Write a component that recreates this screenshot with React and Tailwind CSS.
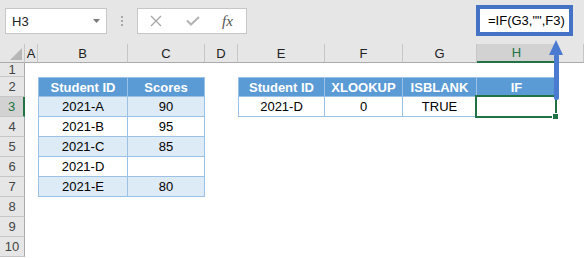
import React from 'react';

const COLS = ['A', 'B', 'C', 'D', 'E', 'F', 'G', 'H', ''];
const LEFT = {
  2: ['Student ID', 'Scores'],
  3: ['2021-A', '90'],
  4: ['2021-B', '95'],
  5: ['2021-C', '85'],
  6: ['2021-D', ''],
  7: ['2021-E', '80'],
};
const RIGHT = {
  2: ['Student ID', 'XLOOKUP', 'ISBLANK', 'IF'],
  3: ['2021-D', '0', 'TRUE', ''],
};

function tableCls(first, top, kind) {
  let c = 'flex items-center justify-center border-r border-b border-[#9bc2e6]';
  if (first) c += ' border-l';
  if (top) c += ' border-t';
  if (kind === 'header') c += ' bg-[#5b9bd5] text-white font-bold';
  else if (kind === 'band') c += ' bg-[#ddebf7] text-black';
  else c += ' bg-white text-black';
  return c;
}

function SheetCell({ r, ci }) {
  let text = '';
  let cls = 'bg-white';
  if (LEFT[r] && (ci === 1 || ci === 2)) {
    text = LEFT[r][ci - 1];
    cls = tableCls(ci === 1, r === 2, r === 2 ? 'header' : r % 2 === 1 ? 'band' : 'plain');
  } else if (RIGHT[r] && ci >= 4 && ci <= 7) {
    text = RIGHT[r][ci - 4];
    cls = tableCls(ci === 4, r === 2, r === 2 ? 'header' : 'plain');
  }
  const selected = r === 3 && ci === 7;
  return (
    <div className={cls + (selected ? ' relative' : '')}>
      {text}
      {selected && (
        <>
          <div className="absolute left-[-2px] top-[-2px] right-[-1px] bottom-[-2px] border-2 border-[#217346]" />
          <div className="absolute right-[-3px] bottom-[-4px] w-[7px] h-[7px] bg-white flex items-center justify-center">
            <div className="w-[5px] h-[5px] bg-[#217346]" />
          </div>
        </>
      )}
    </div>
  );
}

export default function App() {
  const rows = [1, 2, 3, 4, 5, 6, 7, 8, 9, 10];
  return (
    <div className="relative w-[584px] h-[258px] overflow-hidden bg-white font-['Liberation_Sans',Arial,sans-serif] text-[13px] leading-none">
      {/* Top bar */}
      <div className="h-[44px] bg-[#e6e6e6] flex items-start">
        <div className="mt-[8px] ml-[5px] w-[102px] h-[26px] bg-white border border-[#c6c6c6] flex items-center pl-[6px] pr-[6px] text-[#222]">
          <span>H3</span>
          <svg className="ml-auto" width="7" height="4" viewBox="0 0 7 4">
            <polygon points="0,0 7,0 3.5,4" fill="#7a7a7a" />
          </svg>
        </div>
        <div className="ml-[14px] mt-[16px] flex flex-col gap-[2px]">
          <div className="w-[2px] h-[2px] bg-[#a8a8a8]" />
          <div className="w-[2px] h-[2px] bg-[#a8a8a8]" />
          <div className="w-[2px] h-[2px] bg-[#a8a8a8]" />
        </div>
        <div className="mt-[8px] ml-[14px] w-[110px] h-[26px] bg-white border border-[#c6c6c6] flex items-center">
          <svg className="ml-[12px]" width="12" height="12" viewBox="0 0 12 12">
            <path d="M1 1 L11 11 M11 1 L1 11" stroke="#a6a6a6" strokeWidth="1.3" fill="none" />
          </svg>
          <svg className="ml-[24px]" width="14" height="10" viewBox="0 0 14 10">
            <path d="M1 4.5 L5 8.5 L13 1" stroke="#b3b3b3" strokeWidth="2" fill="none" />
          </svg>
          <span className="ml-[22px] font-['Liberation_Serif',serif] italic text-[15px] text-[#555]">fx</span>
        </div>
        <div className="ml-auto mr-[11px] mt-[5px] w-[97px] h-[31px] bg-white border-[4px] border-[#4472c4] flex items-center pl-[8px] text-black">
          =IF(G3,"",F3)
        </div>
      </div>

      {/* Grid */}
      <div className="grid grid-cols-[25px_13px_90px_77px_33px_87px_78px_74px_80px_1fr] grid-rows-[19px_14px_repeat(9,20px)]">
        {/* corner */}
        <div className="bg-[#e6e6e6] border-r border-r-[#c6c6c6] border-b border-b-[#ababab] flex items-end justify-end pr-[2px] pb-[2px]">
          <svg width="12" height="12" viewBox="0 0 12 12">
            <polygon points="12,0 12,12 0,12" fill="#b7b7b7" />
          </svg>
        </div>
        {COLS.map((c, i) =>
          c === 'H' ? (
            <div key={i} className="bg-[#d2d2d2] text-[#217346] border-r border-r-[#c6c6c6] border-b-2 border-b-[#217346] flex items-center justify-center">
              {c}
            </div>
          ) : (
            <div key={i} className="bg-[#e6e6e6] text-[#222] border-r border-r-[#c6c6c6] border-b border-b-[#ababab] flex items-center justify-center">
              {c}
            </div>
          )
        )}
        {rows.map((r) => (
          <React.Fragment key={r}>
            {r === 3 ? (
              <div className="bg-[#d2d2d2] text-[#217346] border-r-2 border-r-[#217346] border-b border-b-[#c6c6c6] flex items-center justify-center">
                {r}
              </div>
            ) : (
              <div className="bg-[#e6e6e6] text-[#444] border-r border-r-[#ababab] border-b border-b-[#c6c6c6] flex items-center justify-center">
                {r}
              </div>
            )}
            {COLS.map((c, ci) => (
              <SheetCell key={ci} r={r} ci={ci} />
            ))}
          </React.Fragment>
        ))}
      </div>

      {/* Annotation arrow */}
      <svg className="absolute left-[547px] top-[38px]" width="18" height="64" viewBox="0 0 18 64">
        <polygon points="9,2 2,17 16,17" fill="#4a7bd0" />
        <rect x="7" y="16" width="5" height="46" rx="2" fill="#4a7bd0" />
      </svg>
    </div>
  );
}
